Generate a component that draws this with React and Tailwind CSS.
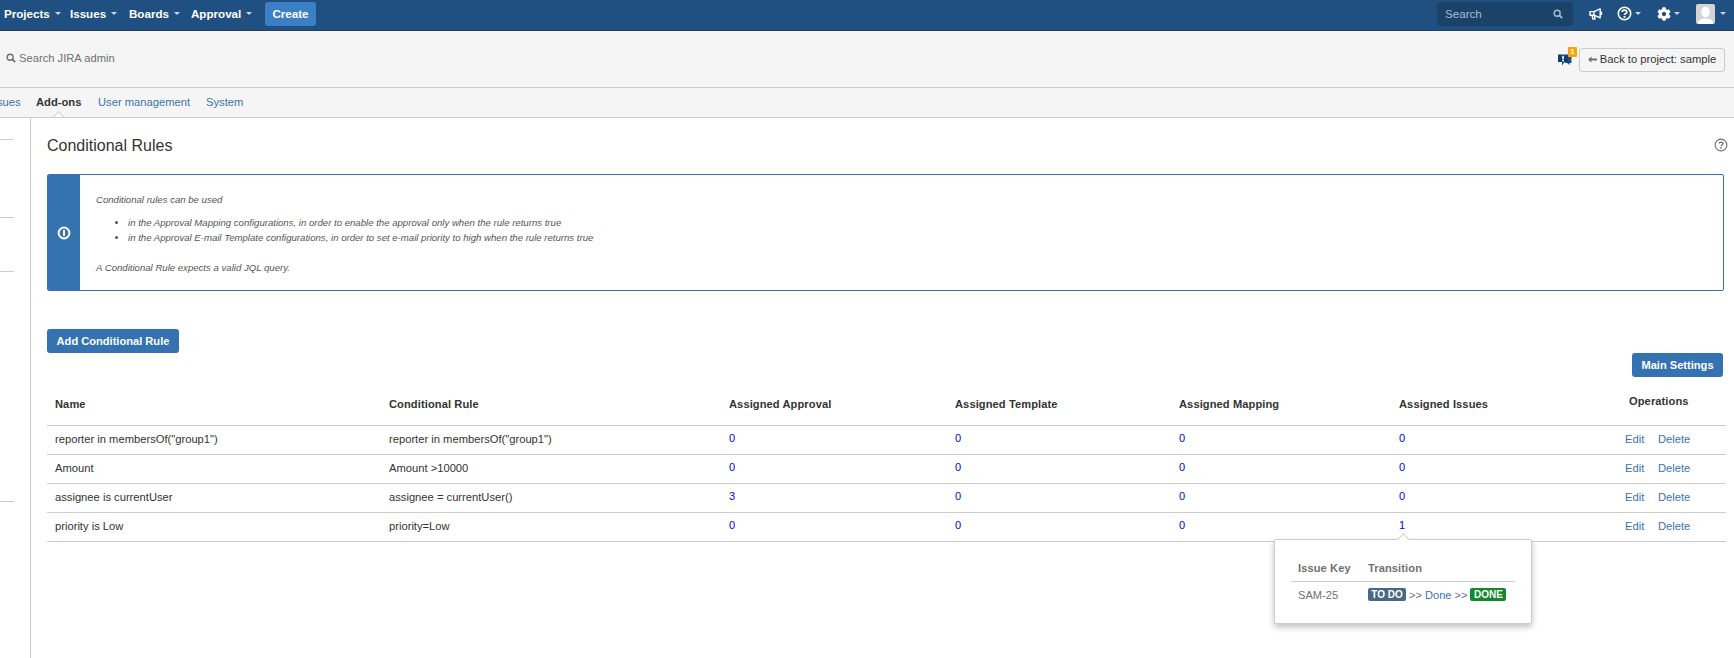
import React from "react";
import { FaCog } from "react-icons/fa";

const Caret = ({ className = "border-t-[#c9d4e2]" }) => (
  <span className={`inline-block w-0 h-0 border-x-[3px] border-x-transparent border-t-[3px] ${className}`} />
);

const SearchIcon = ({ size = 10, color = "#707070" }) => (
  <svg width={size} height={size} viewBox="0 0 12 12" fill="none" stroke={color}>
    <circle cx="5" cy="5" r="3.6" strokeWidth="1.7" />
    <path d="M7.7 7.7 L11 11" strokeWidth="2.2" />
  </svg>
);

const NavItem = ({ label, className }) => (
  <div className={`flex items-center gap-[5px] text-[11.6px] font-bold text-white ${className}`}>
    {label}
    <Caret />
  </div>
);

const rows = [
  ['reporter in membersOf("group1")', 'reporter in membersOf("group1")', 0, 0, 0, 0],
  ["Amount", "Amount >10000", 0, 0, 0, 0],
  ["assignee is currentUser", "assignee = currentUser()", 3, 0, 0, 0],
  ["priority is Low", "priority=Low", 0, 0, 0, 1],
];

const Th = ({ children, className = "" }) => (
  <th className={`text-left font-bold text-[11.1px] tracking-[0.1px] text-[#333] align-middle pl-2 ${className}`}>{children}</th>
);

const Num = ({ v }) => <td className="pl-2 pb-[2px] text-[#0000ee] text-[11px]">{v}</td>;

export default function App() {
  return (
    <div className="h-[658px] w-[1734px] overflow-hidden bg-white text-[#333] font-['Liberation_Sans',Arial,sans-serif]">
      {/* top bar */}
      <header className="h-[31px] bg-[#205081] border-b border-[#2e3d54] flex items-center pb-[3px] pl-1 pr-[8px]">
        <NavItem label="Projects" className="w-[66px]" />
        <NavItem label="Issues" className="w-[59px]" />
        <NavItem label="Boards" className="w-[62px]" />
        <NavItem label="Approval" className="w-[74px]" />
        <div className="w-[51px] h-[24px] rounded-[3px] bg-[#3b7fc4] text-white text-[11.6px] font-bold flex items-center justify-center">Create</div>
        <div className="ml-auto w-[136px] h-[24px] rounded-[3px] bg-[#1b4268] flex items-center justify-between pl-[8px] pr-[10px] text-[11.6px] text-[#a9bdd2]">
          Search
          <SearchIcon size={10} color="#a9bdd2" />
        </div>
        <svg width="14" height="12" viewBox="0 0 14 12" fill="none" stroke="#fff" strokeWidth="1.4" strokeLinejoin="round" className="ml-[16px]">
          <path d="M1 3.6 H5 L11.2 0.9 V9.8 L5 7.2 H1 Z" />
          <path d="M3 7.4 L4 11 H6 L5.4 7.6" />
          <path d="M12.4 3.6 V7" strokeWidth="1.6" />
          <path d="M5 3.8 V7" />
        </svg>
        <div className="ml-[14px] flex items-center gap-[3px]">
          <svg width="15" height="15" viewBox="0 0 15 15" fill="none" stroke="#fff">
            <circle cx="7.5" cy="7.5" r="6.2" strokeWidth="1.6" />
            <path d="M5.2 6 C5.2 3.6 9.8 3.6 9.8 5.9 C9.8 7.5 7.5 7.4 7.5 9" strokeWidth="1.7" />
            <rect x="6.6" y="10" width="1.8" height="1.8" fill="#fff" stroke="none" />
          </svg>
          <Caret />
        </div>
        <div className="ml-[16px] flex items-center gap-[3px]">
          <FaCog size={14} className="text-white" />
          <Caret />
        </div>
        <div className="ml-[16px] flex items-center gap-[5px]">
          <div className="w-[19px] h-[20px] rounded-[2px] bg-[#d4d4d4] overflow-hidden">
            <svg width="19" height="20" viewBox="0 0 19 20" fill="#fff">
              <ellipse cx="9.5" cy="8" rx="4.2" ry="5.4" />
              <path d="M2 20 C2 15 6 14.5 9.5 14.5 C13 14.5 17 15 17 20 Z" />
            </svg>
          </div>
          <Caret />
        </div>
      </header>

      {/* admin bar */}
      <div className="h-[57px] bg-[#f5f5f5] border-b border-[#ccc] flex items-center pl-[6px] pr-[9px]">
        <div className="flex items-center gap-[3px] text-[11.2px] text-[#707070] -mt-[1px]">
          <SearchIcon size={10} />
          Search JIRA admin
        </div>
        <div className="ml-auto flex items-center gap-[8px] mt-[1px]">
          <div className="relative w-[13px] h-[14px]">
            <svg width="14" height="15" viewBox="0 0 14 15">
              <path d="M0 1.5 H10 V9 H6.5 L4 12.5 V9 H0 Z" fill="#143c6e" />
              <path d="M10 3.5 H13.5 V10 H11.5 V12 L9 10 H7 V9 H10 Z" fill="#1f4f8a" />
              <rect x="4.2" y="2.8" width="1.7" height="3.6" fill="#fff" />
              <rect x="4.2" y="7" width="1.7" height="1.4" fill="#fff" />
            </svg>
            <span className="absolute -top-[6px] left-[10px] w-[9px] h-[10px] rounded-[1px] bg-[#f6a609] text-white text-[8px] leading-[10px] text-center font-bold">1</span>
          </div>
          <div className="h-[24px] w-[146px] rounded-[3px] border border-[#ccc] bg-[#f5f5f5] flex items-center justify-center gap-[3px] text-[11.2px] text-[#333]">
            <svg width="9" height="7" viewBox="0 0 9 7" fill="#707070">
              <path d="M0 3.5 L3.5 0.5 V2.6 H9 V4.4 H3.5 V6.5 Z" />
            </svg>
            Back to project: sample
          </div>
        </div>
      </div>

      {/* tabs */}
      <nav className="relative h-[30px] bg-[#f5f5f5] border-b border-[#ccc] flex items-center text-[11.2px] pb-[1px] overflow-hidden">
        <span className="text-[#3b73af] w-[36px] text-right pr-[16px] -ml-[3px] mr-[3px]">sues</span>
        <span className="font-bold text-[#333] w-[62px]">Add-ons</span>
        <span className="text-[#3b73af] w-[108px]">User management</span>
        <span className="text-[#3b73af]">System</span>
        <span className="absolute left-[54px] -bottom-[5px] w-[9px] h-[9px] rotate-45 bg-white border-l border-t border-[#ccc]" />
      </nav>

      {/* body */}
      <div className="flex h-[540px]">
        <aside className="w-[31px] shrink-0 border-r border-[#ccc] pt-[21px]">
          <div className="w-[14px] h-px bg-[#ccc]" />
          <div className="w-[14px] h-px bg-[#ccc] mt-[77px]" />
          <div className="w-[14px] h-px bg-[#ccc] mt-[53px]" />
          <div className="w-[14px] h-px bg-[#ccc] mt-[229px]" />
        </aside>

        <main className="relative flex-1 pl-[16px] pr-[8px]">
          <div className="flex items-center justify-between h-[30px] mt-[13px]">
            <h1 className="text-[16px] font-normal text-[#333]">Conditional Rules</h1>
            <svg width="14" height="14" viewBox="0 0 15 15" fill="none" stroke="#707070" className="-mr-[2px] -mt-[3px]">
              <circle cx="7.5" cy="7.5" r="6.3" strokeWidth="1.2" />
              <path d="M5.4 6 C5.4 3.8 9.6 3.8 9.6 5.9 C9.6 7.4 7.5 7.4 7.5 8.9" strokeWidth="1.4" />
              <rect x="6.7" y="9.8" width="1.6" height="1.6" fill="#707070" stroke="none" />
            </svg>
          </div>

          {/* info box */}
          <div className="mt-[13px] h-[117px] w-[1677px] flex border border-[#3572b0] rounded-[2px] overflow-hidden">
            <div className="w-[32px] shrink-0 bg-[#3572b0] flex items-center justify-center">
              <svg width="14" height="14" viewBox="0 0 14 14" fill="none">
                <circle cx="7" cy="7" r="5.4" stroke="#fff" strokeWidth="2" />
                <rect x="6" y="4" width="2" height="6" fill="#fff" />
              </svg>
            </div>
            <div className="pl-[16px] pt-[17px] text-[9.6px] italic text-[#555] leading-[15px]">
              <p>Conditional rules can be used</p>
              <ul className="list-disc pl-[32px] mt-[8px] marker:text-[#555]">
                <li>in the Approval Mapping configurations, in order to enable the approval only when the rule returns true</li>
                <li>in the Approval E-mail Template configurations, in order to set e-mail priority to high when the rule returns true</li>
              </ul>
              <p className="mt-[15px]">A Conditional Rule expects a valid JQL query.</p>
            </div>
          </div>

          <div className="mt-[38px] w-[132px] h-[24px] rounded-[3px] bg-[#3572b0] text-white text-[11.1px] font-bold flex items-center justify-center">Add Conditional Rule</div>
          <div className="flex justify-end pr-[3px]">
            <div className="w-[91px] h-[24px] rounded-[3px] bg-[#3572b0] text-white text-[11.1px] font-bold flex items-center justify-center">Main Settings</div>
          </div>

          {/* table */}
          <table className="mt-[8px] w-[1679px] table-fixed border-collapse text-[11.2px] text-[#333]">
            <colgroup>
              <col className="w-[334px]" />
              <col className="w-[340px]" />
              <col className="w-[226px]" />
              <col className="w-[224px]" />
              <col className="w-[220px]" />
              <col className="w-[217px]" />
              <col />
            </colgroup>
            <thead>
              <tr className="h-[40px] border-b border-[#ccc]">
                <Th>Name</Th>
                <Th>Conditional Rule</Th>
                <Th>Assigned Approval</Th>
                <Th>Assigned Template</Th>
                <Th>Assigned Mapping</Th>
                <Th>Assigned Issues</Th>
                <th className="text-left font-bold text-[11.1px] tracking-[0.1px] text-[#333] pl-[21px] pb-[6px]">Operations</th>
              </tr>
            </thead>
            <tbody>
              {rows.map((r, i) => (
                <tr key={i} className="h-[29px] border-b border-[#ccc]">
                  <td className="pl-2">{r[0]}</td>
                  <td className="pl-2">{r[1]}</td>
                  <Num v={r[2]} />
                  <Num v={r[3]} />
                  <Num v={r[4]} />
                  <Num v={r[5]} />
                  <td className="pl-[17px] text-[#3b73af]">
                    <span className="inline-block w-[33px]">Edit</span>
                    <span>Delete</span>
                  </td>
                </tr>
              ))}
            </tbody>
          </table>

          {/* popover */}
          <div className="absolute left-[1243px] top-[421px] w-[258px] h-[85px] bg-white border border-[#ccc] rounded-[2px] shadow-[0_3px_6px_rgba(0,0,0,0.25)] pl-[16px] pr-[16px] pt-[18px] text-[11.1px]">
            <span className="absolute -top-[5px] left-[124px] w-[9px] h-[9px] rotate-45 bg-white border-l border-t border-[#ccc]" />
            <div className="flex h-[24px] border-b border-[#ccc] font-bold text-[#707070] tracking-[0.1px] pl-[7px] pb-[3px] items-center">
              <span className="w-[70px]">Issue Key</span>
              <span>Transition</span>
            </div>
            <div className="flex items-center pl-[7px] h-[26px] text-[#707070]">
              <span className="w-[70px]">SAM-25</span>
              <span className="flex items-center gap-[3px]">
                <span className="h-[13px] w-[38px] rounded-[2px] bg-[#4a6785] text-white text-[10px] font-bold flex items-center justify-center">TO DO</span>
                &gt;&gt;
                <span className="text-[#3b73af]">Done</span>
                &gt;&gt;
                <span className="h-[13px] w-[36px] rounded-[2px] bg-[#14892c] text-white text-[10px] font-bold flex items-center justify-center">DONE</span>
              </span>
            </div>
          </div>
        </main>
      </div>
    </div>
  );
}
